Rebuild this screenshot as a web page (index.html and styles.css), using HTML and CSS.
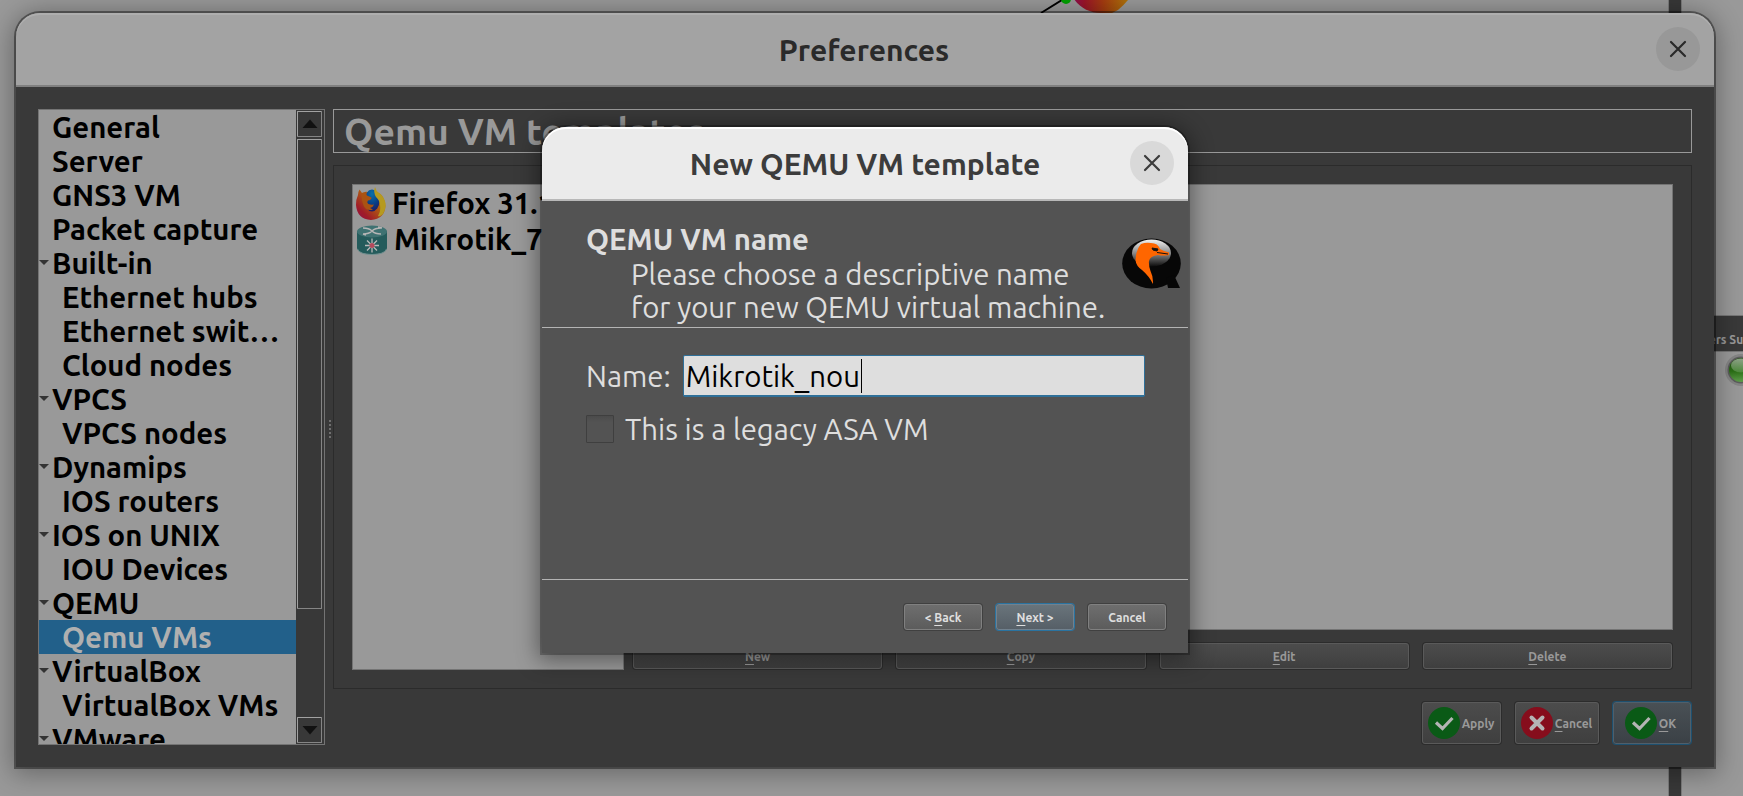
FILE: index.html
```html
<!DOCTYPE html>
<html lang="en">
<head>
<meta charset="utf-8">
<title>Preferences</title>
<link rel="stylesheet" href="styles.css">
</head>
<body>
<svg width="0" height="0" class="defs" aria-hidden="true">
  <defs>
    <linearGradient id="foxBody" x1="1" y1="0" x2="0" y2="1">
      <stop offset="0" stop-color="#b5a423"/><stop offset=".4" stop-color="#b0620f"/><stop offset=".75" stop-color="#a01c28"/><stop offset="1" stop-color="#8c0f4d"/>
    </linearGradient>
    <radialGradient id="foxGlobe" cx=".5" cy=".2" r=".9">
      <stop offset="0" stop-color="#0a70a8"/><stop offset=".55" stop-color="#0a3c84"/><stop offset="1" stop-color="#2a0f55"/>
    </radialGradient>
    <linearGradient id="qemuShine" x1="0" y1="0" x2="0" y2="1">
      <stop offset="0" stop-color="#f2f2f2"/><stop offset=".5" stop-color="#8a8a8a"/><stop offset="1" stop-color="#0c0c0c"/>
    </linearGradient>
    <linearGradient id="led" x1="0" y1="0" x2="0" y2="1">
      <stop offset="0" stop-color="#1d4c0e"/><stop offset=".55" stop-color="#2b7016"/><stop offset="1" stop-color="#5f9f4c"/>
    </linearGradient>
    <linearGradient id="ledGlow" x1="0" y1="0" x2="0" y2="1">
      <stop offset="0" stop-color="#8fa389"/><stop offset="1" stop-color="#4c8a3a"/>
    </linearGradient>
    <linearGradient id="foxDesk" x1="0" y1="0" x2="1" y2="0">
      <stop offset="0" stop-color="#8c0f4d"/><stop offset=".2" stop-color="#9c1528"/><stop offset=".55" stop-color="#a63d10"/><stop offset="1" stop-color="#b0760a"/>
    </linearGradient>
  </defs>
</svg>

<div class="desktop">
  <svg class="topology" width="120" height="14" viewBox="0 0 120 14">
    <path d="M11 13 32 0" stroke="#000" stroke-width="2"/>
    <circle cx="36" cy="-1" r="5" fill="#00a000"/>
    <path d="M44-1C50 8 60 13 71 13h11l6-3q6-5 10-10z" fill="url(#foxDesk)"/>
  </svg>
  <div class="splitter"></div>
  <div class="dock">
    <div class="dock-title">ers Summary</div>
    <svg class="dock-led" width="34" height="34" viewBox="0 0 34 34">
      <circle cx="17" cy="17" r="16" fill="#858585"/>
      <circle cx="17" cy="17" r="13.5" fill="#5c5c5c"/>
      <circle cx="17" cy="17" r="12" fill="url(#led)"/>
      <ellipse cx="17" cy="12.500" rx="10" ry="7" fill="url(#ledGlow)"/>
    </svg>
  </div>

  <div class="window prefs">
    <div class="titlebar">
      <span>Preferences</span>
      <div class="close"><svg width="18" height="18" viewBox="0 0 18 18"><path d="M2 2l14 14M16 2L2 16" stroke="currentColor" stroke-width="2.2" stroke-linecap="round"/></svg></div>
    </div>
    <div class="prefs-body">
      <div class="panes">
        <div class="tree">
          <ul class="tree-list">
            <li>General</li>
            <li>Server</li>
            <li>GNS3 VM</li>
            <li>Packet capture</li>
            <li class="open">Built-in</li>
            <li class="child">Ethernet hubs</li>
            <li class="child">Ethernet swit…</li>
            <li class="child">Cloud nodes</li>
            <li class="open">VPCS</li>
            <li class="child">VPCS nodes</li>
            <li class="open">Dynamips</li>
            <li class="child">IOS routers</li>
            <li class="open">IOS on UNIX</li>
            <li class="child">IOU Devices</li>
            <li class="open">QEMU</li>
            <li class="child selected">Qemu VMs</li>
            <li class="open">VirtualBox</li>
            <li class="child">VirtualBox VMs</li>
            <li class="open">VMware</li>
          </ul>
          <div class="scrollbar">
            <div class="step"><svg width="16" height="10" viewBox="0 0 16 10"><path d="M.5 9 8 .5 15.500 9z" fill="#111"/></svg></div>
            <div class="thumb"></div>
            <div class="track"></div>
            <div class="step"><svg width="16" height="10" viewBox="0 0 16 10"><path d="M.5 1 8 9.500 15.500 1z" fill="#111"/></svg></div>
          </div>
        </div>
        <div class="handle"><i></i><i></i><i></i><i></i><i></i></div>
        <div class="page">
          <div class="page-title">Qemu VM templates</div>
          <div class="group">
            <div class="vm-list">
              <div class="vm">
                <svg width="32" height="34" viewBox="0 0 32 34">
                  <path d="M3 8q0-3 1.500-5.500L7 6q3-1 6-1h8q5 1 7 5 2.500 4 2.500 9-1 13-14.500 14Q2 32 1 18q0-6 2-10z" fill="url(#foxBody)"/>
                  <ellipse cx="17" cy="13.500" rx="7.500" ry="11" fill="url(#foxGlobe)"/>
                  <path d="M7 6q3-1 4.500-1.500-.5 2 .5 4l4.500 2q0 2.500-3.500 3-1.500 2 .5 3.500 2.500 1 5.500.5-1 3-4 3.500l3 1.500q-6 2-9-3-3-6-2-13.500z" fill="#aa5312"/>
                  <path d="M20 0q1 4 4 6 5 4 6.500 10 .5 6-2.500 11-3 3-5 2 3-5 2-11-.5-5-4-8-3-5-1-10z" fill="#b59a20"/>
                </svg>
                <span>Firefox 31.1.1</span>
              </div>
              <div class="vm">
                <svg width="34" height="34" viewBox="0 0 34 34">
                  <path d="M2 8v17q1 6 15 6t15-6V8z" fill="#245b5b"/>
                  <ellipse cx="17" cy="8.500" rx="15" ry="6" fill="#3f7272"/>
                  <path d="M2.500 26q2 5.500 14.500 5.500T31.500 26" fill="none" stroke="#6f8f8f" stroke-width="1"/>
                  <path d="M8 5q6 0 9 3t9 3M26 5q-6 0-9 3t-9 3M8 11l3 1M23 4l4 1" fill="none" stroke="#b5b5b5" stroke-width="1.500"/>
                  <path d="M17 15.500v14M10 22.500h14M12 17.500l10 10M22 17.500l-10 10" stroke="#b9b9b9" stroke-width="1.300"/>
                  <circle cx="17" cy="22.500" r="2.500" fill="#b54a5c"/>
                </svg>
                <span>Mikrotik_7.11</span>
              </div>
            </div>
            <div class="detail">
              <div class="detail-view"></div>
              <div class="detail-actions">
                <div class="btn"><u>N</u>ew</div>
                <div class="btn"><u>C</u>opy</div>
                <div class="btn"><u>E</u>dit</div>
                <div class="btn"><u>D</u>elete</div>
              </div>
            </div>
          </div>
        </div>
      </div>
      <div class="prefs-actions">
        <div class="btn apply"><svg width="32" height="32" viewBox="0 0 32 32"><circle cx="16" cy="16" r="16" fill="#0a5a16"/><path d="M8 15.500l6.500 6L24.500 11" fill="none" stroke="#b4b4b4" stroke-width="3.200"/></svg>Apply</div>
        <div class="btn cancel"><svg width="32" height="32" viewBox="0 0 32 32"><circle cx="16" cy="16" r="16" fill="#860d1c"/><path d="M10.500 10.500l11 11M21.500 10.500l-11 11" stroke="#b4b4b4" stroke-width="4" stroke-linecap="round"/></svg><span><u>C</u>ancel</span></div>
        <div class="btn ok default"><svg width="32" height="32" viewBox="0 0 32 32"><circle cx="16" cy="16" r="16" fill="#0a5a16"/><path d="M8 15.500l6.500 6L24.500 11" fill="none" stroke="#b4b4b4" stroke-width="3.200"/></svg><span><u>O</u>K</span></div>
      </div>
    </div>
  </div>

  <div class="window wizard">
    <div class="titlebar">
      <span>New QEMU VM template</span>
      <div class="close"><svg width="18" height="18" viewBox="0 0 18 18"><path d="M2 2l14 14M16 2L2 16" stroke="currentColor" stroke-width="2.2" stroke-linecap="round"/></svg></div>
    </div>
    <div class="wizard-head">
      <div class="wizard-intro">
        <div class="wizard-title">QEMU VM name</div>
        <div class="wizard-sub">Please choose a descriptive name<br>for your new QEMU virtual machine.</div>
      </div>
      <svg class="qemu" width="60" height="52" viewBox="0 0 60 52">
        <ellipse cx="29.500" cy="25.500" rx="29.300" ry="25" fill="#070707"/>
        <path d="M44 40l8-3 6 13H46z" fill="#070707"/>
        <ellipse cx="29.500" cy="15" rx="19.500" ry="13.500" fill="url(#qemuShine)"/>
        <path d="M19 6q5-2 10-1 7 0 9 6 4 2.500 9 3.500v2.500q-6 1-11 0-8 1-9 6-.500 4 1.500 10 3 6 2.500 13Q27 38 20 32 14 28 13.500 22 14 12 19 6z" fill="#ff6600"/>
        <path d="M30 10l6 1-1 2-4-1zM35 14.500l11 1.500" fill="#111" stroke="#111" stroke-width="1"/>
      </svg>
    </div>
    <div class="wizard-form">
      <div class="field"><span>Name:</span><div class="input">Mikrotik_nou<i class="caret"></i></div></div>
      <div class="check"><i class="box"></i><span>This is a legacy ASA VM</span></div>
    </div>
    <div class="wizard-actions">
      <div class="btn">&lt; <u>B</u>ack</div>
      <div class="btn default"><u>N</u>ext &gt;</div>
      <div class="btn">Cancel</div>
    </div>
  </div>
</div>
</body>
</html>
```
FILE: styles.css
```css
* { box-sizing: border-box; }

body {
  margin: 0;
  font-family: "Ubuntu", "Noto Sans", sans-serif;
  font-size: 29.33px;
  color: #000;
}

.defs { position: absolute; }

.desktop {
  position: relative;
  width: 1743px;
  height: 796px;
  overflow: hidden;
  background: #999;
}

.topology { position: absolute; left: 1030px; top: 0; }

.splitter {
  position: absolute;
  left: 1668px;
  top: 0;
  width: 14px;
  height: 796px;
  background: #383838;
  border: solid #7c7c7c;
  border-width: 0 1px;
}

.dock {
  position: absolute;
  left: 1700px;
  top: 315px;
  width: 60px;
}

.dock-title {
  height: 37px;
  padding: 6px 0 0 9px;
  border: solid #777;
  border-width: 1px 0;
  background: #393939;
  color: #999;
  font-size: 12px;
  font-weight: 700;
  line-height: 36px;
  white-space: nowrap;
  overflow: hidden;
}

.dock-led { display: block; margin: 1px 0 0 24px; }

/* Window frame */
.window {
  position: absolute;
  display: flex;
  flex-direction: column;
  border-radius: 24px 24px 0 0;
}

.titlebar {
  position: relative;
  display: flex;
  align-items: center;
  justify-content: center;
  height: 74px;
  flex: none;
  padding-top: 2px;
  border-radius: 24px 24px 0 0;
  font-size: 30px;
  font-weight: 700;
}

.close {
  position: absolute;
  top: 14px;
  width: 44px;
  height: 44px;
  display: flex;
  align-items: center;
  justify-content: center;
  border-radius: 50%;
}

.prefs {
  left: 16px;
  top: 13px;
  width: 1698px;
  height: 754px;
  background: #393939;
  box-shadow: 0 0 0 2px rgba(0, 0, 0, .4), 0 3px 26px 4px rgba(0, 0, 0, .32);
}

.prefs .titlebar {
  padding-right: 2px;
  background: #a3a3a3;
  border-bottom: 2px solid #808080;
  box-shadow: inset 0 2px #aeaeae;
  color: #2a2a2a;
}

.prefs .close { right: 14px; background: #989898; }

.prefs-body {
  flex: 1;
  padding: 22px;
  display: flex;
  flex-direction: column;
  min-height: 0;
}

.panes { display: flex; height: 636px; }

/* Category tree */
.tree {
  width: 287px;
  display: flex;
  border: 1px solid #747474;
  background: #999;
  overflow: hidden;
}

.tree-list {
  flex: 1;
  margin: 0;
  padding: 0;
  list-style: none;
  font-weight: 700;
  line-height: 36px;
  white-space: nowrap;
}

.tree-list li { position: relative; height: 34px; padding-left: 13px; }
.tree-list .child { padding-left: 23px; }
.tree-list .selected { background: #22608a; color: #b0b0b0; }

.tree-list .open::before {
  content: "";
  position: absolute;
  left: 0;
  top: 14px;
  border: solid transparent;
  border-width: 5px 5px 0;
  border-top-color: #333;
}

.scrollbar {
  width: 28px;
  display: flex;
  flex-direction: column;
  background: #383838;
}

.scrollbar .step, .scrollbar .thumb {
  margin: 1px 2px 1px 1px;
  border: 1px solid #858585;
  border-top-color: #a2a2a2;
  border-left-color: #a2a2a2;
  border-radius: 1px;
}

.scrollbar .step {
  height: 26px;
  flex: none;
  display: flex;
  align-items: center;
  justify-content: center;
}

.scrollbar .thumb { height: 470px; }
.scrollbar .track { flex: 1; }

.handle {
  width: 8px;
  display: flex;
  flex-direction: column;
  align-items: center;
  justify-content: center;
  gap: 2px;
  padding: 4px 0 0 2px;
}

.handle i { width: 2px; height: 2px; background: #6f6f6f; }

/* Settings page */
.page {
  flex: 1;
  height: 580px;
  display: flex;
  flex-direction: column;
}

.page-title {
  height: 44px;
  padding-left: 10px;
  border: 1px solid #999;
  color: #999;
  font-size: 37.330px;
  font-weight: 700;
  line-height: 42px;
}

.group {
  flex: 1;
  display: flex;
  gap: 9px;
  margin-top: 12px;
  padding: 18px;
  border: 1px solid #2b2b2b;
}

.vm-list {
  width: 272px;
  padding: 1px 2px;
  border: 1px solid #747474;
  background: #999;
  font-weight: 700;
  line-height: 36px;
  overflow: hidden;
  white-space: nowrap;
}

.vm { display: flex; align-items: center; height: 36px; gap: 5px; }
.vm svg { flex: none; }

.detail { flex: 1; display: flex; flex-direction: column; }

.detail-view {
  height: 446px;
  border: 1px solid #747474;
  background: #999;
}

.detail-actions {
  display: grid;
  grid-template-columns: repeat(4, 1fr);
  gap: 14px;
  margin: 13px 1px 0 0;
}

/* Buttons */
.btn {
  height: 26px;
  display: flex;
  align-items: center;
  justify-content: center;
  border: 1px solid #5a5a5a;
  border-radius: 3px;
  background: linear-gradient(#4c4c4c, #3f3f3f);
  box-shadow: 0 0 0 1px #2c2c2c;
  color: #999;
  font-size: 12px;
  font-weight: 700;
  white-space: pre;
}

.btn u { text-underline-offset: 3px; }

.prefs-actions {
  display: flex;
  justify-content: flex-end;
  gap: 14px;
  margin-top: -43px;
  padding: 0 1px;
}

.prefs-actions .btn { height: 42px; gap: 2px; padding: 0 1px 0 0; }
.prefs-actions .apply { width: 79px; }
.prefs-actions .cancel { width: 84px; }
.prefs-actions .ok { width: 78px; padding-right: 3px; }

.prefs-actions .default {
  border-color: #4f5f6b;
  background: linear-gradient(#495055, #3b4146);
  box-shadow: 0 0 0 1px #1d506f;
}

/* New template wizard */
.wizard {
  left: 542px;
  top: 127px;
  width: 646px;
  height: 526px;
  background: #535353;
  color: #dedede;
  box-shadow: 0 0 0 2px rgba(0, 0, 0, .25), 0 3px 22px 4px rgba(0, 0, 0, .42);
}

.wizard .titlebar {
  background: #ebebeb;
  border-bottom: 2px solid #b8b8b8;
  box-shadow: inset 0 2px #fff;
  color: #3c3c3c;
}

.wizard .close { right: 14px; background: #d9d9d9; }

.wizard-head {
  height: 127px;
  display: flex;
  justify-content: space-between;
  padding: 21px 6px 0 44px;
  border-bottom: 1px solid #b4b4b4;
}

.wizard-title { font-weight: 700; line-height: 35px; padding-bottom: 1px; }
.wizard-sub { padding-left: 45px; line-height: 33px; white-space: nowrap; }
.qemu { flex: none; margin-top: 16px; }

.wizard-form { height: 252px; padding: 27px 43px 0 44px; border-bottom: 1px solid #b4b4b4; }
.field { display: flex; align-items: center; height: 42px; gap: 12px; }

.input {
  flex: 1;
  height: 42px;
  display: flex;
  align-items: center;
  padding: 1px 0 0 2px;
  border: 2px solid #2f7099;
  border-width: 1px 1px 2px;
  border-radius: 2px;
  background: #dedede;
  color: #000;
}

.caret { width: 1px; height: 34px; margin-left: 1px; background: #000; }

.check { display: flex; align-items: center; gap: 11px; height: 36px; margin-top: 14px; }

.box {
  width: 28px;
  height: 28px;
  border: 1px solid #3f3f3f;
  border-radius: 1px;
  background: linear-gradient(#4b4b4b, #535353 6px);
}

.wizard-actions {
  display: flex;
  justify-content: flex-end;
  gap: 14px;
  padding: 24px 22px 0;
}

.wizard .btn {
  width: 78px;
  height: 26px;
  border-color: #808080;
  background: linear-gradient(#6e6e6e, #5c5c5c);
  box-shadow: 0 0 0 1px #404040;
  color: #dedede;
}

.wizard .default {
  border-color: #71818e;
  background: linear-gradient(#69747b, #565f67);
  box-shadow: 0 0 0 1px #2a73a0;
}
```
